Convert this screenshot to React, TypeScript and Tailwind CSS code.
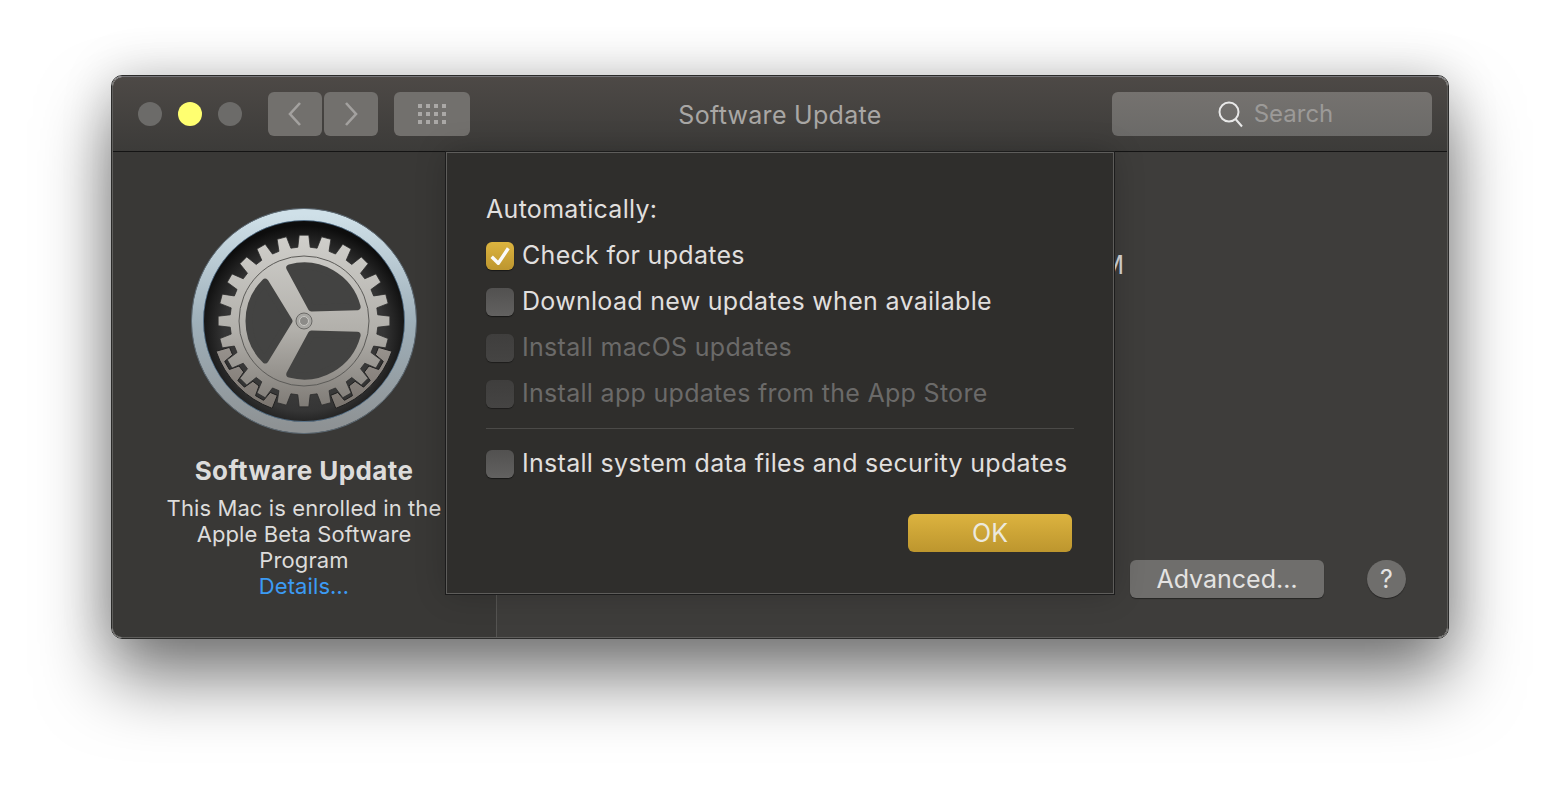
import React from "react";

const polar = (r: number, deg: number) => {
  const a = (deg * Math.PI) / 180;
  return `${(r * Math.cos(a)).toFixed(2)} ${(r * Math.sin(a)).toFixed(2)}`;
};

// 24 tooth wheel, one tooth every 15deg starting at 0deg
const gearPath = (() => {
  let d = "";
  for (let i = 0; i < 24; i++) {
    const c = i * 15;
    d += `${i === 0 ? "M" : "L"}${polar(74, c - 4.8)} L${polar(86, c - 3.2)} L${polar(86, c + 3.2)} L${polar(74, c + 4.8)} `;
  }
  return d + "Z";
})();

// toothed bracket hugging the lower left of the wheel, its teeth sit between the wheel's
const bracketPath = (() => {
  let d = `M${polar(93, 110)} A93 93 0 0 1 ${polar(93, 161)} L${polar(79, 160.5)} `;
  [157.5, 142.5, 127.5, 112.5].forEach((c, i) => {
    d += `L${polar(79, c + 2.8)} L${polar(79, c - 2.8)} `;
    if (i < 3) d += `L${polar(89, c - 4.5)} L${polar(89, c - 10.5)} `;
  });
  return d + "Z";
})();

const holePath = `M${polar(15, -60)} L${polar(55, -105)} A55 55 0 0 1 ${polar(55, -15)} Z`;

const GearIcon = () => (
  <svg width="228" height="228" viewBox="-114 -114 228 228">
    <defs>
      <linearGradient id="ring" x1="0" y1="0" x2="0" y2="1">
        <stop offset="0" stopColor="#cfe0e8" />
        <stop offset="0.5" stopColor="#9fb0ba" />
        <stop offset="1" stopColor="#8e9294" />
      </linearGradient>
      <linearGradient id="metal" x1="0" y1="0" x2="0" y2="1">
        <stop offset="0" stopColor="#d0cfcb" />
        <stop offset="0.55" stopColor="#b2b0ab" />
        <stop offset="1" stopColor="#7f7b76" />
      </linearGradient>
      <linearGradient id="bracket" x1="0" y1="0" x2="0" y2="1">
        <stop offset="0" stopColor="#97928d" />
        <stop offset="1" stopColor="#7a746e" />
      </linearGradient>
      <radialGradient id="well" cx="0.5" cy="0.55" r="0.5">
        <stop offset="0" stopColor="#4c4c4b" />
        <stop offset="0.75" stopColor="#353535" />
        <stop offset="1" stopColor="#0d0d0d" />
      </radialGradient>
    </defs>
    <circle r="106" fill="url(#well)" />
    <circle r="106.5" fill="none" stroke="url(#ring)" strokeWidth="11.5" />
    <circle r="112.5" fill="none" stroke="#5d6a74" strokeWidth="1" />
    <circle r="100.5" fill="none" stroke="#6f9cc4" strokeWidth="0.8" opacity="0.7" />
    <path d={bracketPath} fill="url(#bracket)" stroke="#1f1f1f" strokeWidth="1" strokeLinejoin="round" />
    <path d={bracketPath} transform="scale(-1 1)" fill="url(#bracket)" stroke="#1f1f1f" strokeWidth="1" strokeLinejoin="round" />
    <path d={gearPath} fill="url(#metal)" stroke="#2c2c2c" strokeWidth="0.8" strokeLinejoin="round" />
    <circle r="65" fill="none" stroke="#5c5b58" strokeWidth="1" />
    {[0, 120, 240].map((rot) => (
      <path
        key={rot}
        d={holePath}
        transform={`rotate(${rot})`}
        fill="#434342"
        stroke="#434342"
        strokeWidth="7"
        strokeLinejoin="round"
      />
    ))}
    <circle r="8" fill="#a9a8a4" stroke="#6a6966" strokeWidth="1" />
    <circle r="4.5" fill="#8c8b88" stroke="#c9c8c4" strokeWidth="1" />
  </svg>
);

const Dots = () => (
  <div className="grid grid-cols-4 gap-x-1 gap-y-1">
    {Array.from({ length: 12 }).map((_, i) => (
      <div key={i} className="w-1 h-1 bg-[#aaa8a6]" />
    ))}
  </div>
);

const CheckRow = ({ label, checked, disabled }: { label: string; checked?: boolean; disabled?: boolean }) => (
  <div className="flex items-center gap-2 h-[46px]">
    {checked ? (
      <div className="w-7 h-7 mt-[2px] rounded-md bg-gradient-to-b from-[#dcb43f] to-[#bd962f] flex items-center justify-center shadow-[0_1px_1px_rgba(0,0,0,0.5)]">
        <svg width="20" height="20" viewBox="0 0 20 20" fill="none">
          <path d="M1.7 10.7 L8.3 17.3 L18.3 2.3" stroke="#fafafa" strokeWidth="3.4" strokeLinejoin="round" />
        </svg>
      </div>
    ) : (
      <div
        className={
          disabled
            ? "w-7 h-7 mt-[2px] rounded-md bg-gradient-to-b from-[#3f3e3d] to-[#454443] shadow-[0_1px_1px_rgba(0,0,0,0.4)]"
            : "w-7 h-7 mt-[2px] rounded-md bg-gradient-to-b from-[#525150] to-[#626160] shadow-[0_1px_1px_rgba(0,0,0,0.5)]"
        }
      />
    )}
    <span className={disabled ? "text-[#6b6a69]" : "text-[#e0dfde]"}>{label}</span>
  </div>
);

const App: React.FC = () => {
  return (
    <div
      className="w-[1560px] h-[786px] bg-white overflow-hidden pl-[111px] pt-[75px] text-[25px] leading-[30px]"
      style={{ fontFamily: "Inter, 'Noto Sans', sans-serif" }}
    >
      <div className="w-[1338px] h-[564px] rounded-[11px] border border-[#2b2b2a] shadow-[0_40px_70px_rgba(0,0,0,0.5),0_0_50px_rgba(0,0,0,0.18)]">
        <div className="h-full rounded-[10px] flex flex-col overflow-hidden border border-[#5f5e5c] border-t-[#77767a]">
          {/* title bar */}
          <div className="h-[75px] shrink-0 flex items-center pl-[25px] pr-[15px] bg-gradient-to-b from-[#4d4946] to-[#3c3b39] border-b border-[#141414]">
            <div className="flex gap-4 mr-[26px]">
              <div className="w-6 h-6 rounded-full bg-[#6c6b69]" />
              <div className="w-6 h-6 rounded-full bg-[#ffff70]" />
              <div className="w-6 h-6 rounded-full bg-[#6c6b69]" />
            </div>
            <div className="flex gap-0.5">
              <div className="w-[54px] h-11 rounded-md bg-[#72706d] flex items-center justify-center">
                <svg width="18" height="26" viewBox="0 0 18 26" fill="none">
                  <path d="M14 2 L4 13 L14 24" stroke="#a3a19f" strokeWidth="2.6" />
                </svg>
              </div>
              <div className="w-[54px] h-11 rounded-md bg-[#72706d] flex items-center justify-center">
                <svg width="18" height="26" viewBox="0 0 18 26" fill="none">
                  <path d="M4 2 L14 13 L4 24" stroke="#a3a19f" strokeWidth="2.6" />
                </svg>
              </div>
            </div>
            <div className="w-[76px] h-11 ml-4 rounded-md bg-[#72706d] flex items-center justify-center">
              <Dots />
            </div>
            <div className="flex-1 text-center text-[#a9a7a5] pr-[22px] pt-[2px] tracking-[0.3px]">Software Update</div>
            <div className="w-[320px] h-11 rounded-md bg-gradient-to-b from-[#75726f] to-[#6b6a68] flex items-center justify-center gap-[10px] pl-[7px]">
              <svg width="26" height="28" viewBox="0 0 26 28" fill="none">
                <circle cx="11" cy="12" r="9.5" stroke="#e8e8e8" strokeWidth="2" />
                <path d="M17.5 19 L24 26.5" stroke="#e8e8e8" strokeWidth="2" />
              </svg>
              <span className="text-[#9c9a98] text-[24px]">Search</span>
            </div>
          </div>

          {/* body */}
          <div className="relative flex-1 flex bg-[#3e3d3b]">
            {/* sidebar */}
            <div className="w-[384px] shrink-0 bg-[#393836] border-r border-[#555452] flex flex-col items-center pt-[55px] pr-px text-[#dddcdb] text-center leading-[26px] text-[22px] tracking-[0.1px]">
              <GearIcon />
              <div className="font-bold mt-[23px] text-[26px] tracking-[0.4px]">Software Update</div>
              <div className="mt-[11px]">
                This Mac is enrolled in the
                <br />
                Apple Beta Software
                <br />
                Program
                <br />
                <span className="text-[#3c9bf4]">Details…</span>
              </div>
            </div>

            {/* right pane */}
            <div className="flex-1 flex flex-col pt-[98px] pr-[41px] pb-[39px]">
              <div className="text-right pr-[282px] text-[#d8d8d8]">PM</div>
              <div className="flex-1" />
              <div className="flex items-center justify-end gap-[43px]">
                <div className="w-[194px] h-[38px] rounded-md bg-[#6f6e6c] flex items-center justify-center text-[#e4e3e2] shadow-[0_1px_1px_rgba(0,0,0,0.4)]">
                  Advanced…
                </div>
                <div className="w-[39px] h-[38px] rounded-full bg-[#6f6e6c] flex items-center justify-center text-[#e4e3e2] shadow-[0_1px_1px_rgba(0,0,0,0.4)]">
                  ?
                </div>
              </div>
            </div>

            {/* sheet */}
            <div className="absolute left-[333px] top-0 w-[668px] h-[442px] bg-[#2f2e2c] border border-[#5e5d5b] shadow-[0_0_0_1px_#1c1c1c,0_0_30px_rgba(0,0,0,0.2)] px-[39px] pt-[41px] text-[#e0dfde] tracking-[0.3px] flex flex-col">
              <div className="h-[30px] flex items-center mb-[8px]">Automatically:</div>
              <CheckRow label="Check for updates" checked />
              <CheckRow label="Download new updates when available" />
              <CheckRow label="Install macOS updates" disabled />
              <CheckRow label="Install app updates from the App Store" disabled />
              <div className="h-px bg-[#4b4a48] mt-[12px] mb-[11px]" />
              <CheckRow label="Install system data files and security updates" />
              <div className="flex justify-end mt-[28px] pr-[2px]">
                <div className="w-[164px] h-[38px] rounded-md bg-gradient-to-b from-[#dcb33f] to-[#bd962e] flex items-center justify-center text-[#ece9de] tracking-normal">
                  OK
                </div>
              </div>
            </div>
          </div>
        </div>
      </div>
    </div>
  );
};

export default App;
